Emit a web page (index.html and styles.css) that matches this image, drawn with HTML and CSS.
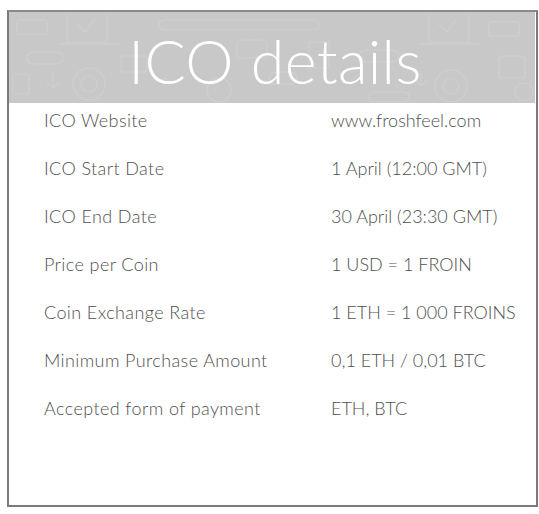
FILE: index.html
```html
<!DOCTYPE html>
<html>
<head>
<meta charset="utf-8">
<link rel="stylesheet" href="styles.css">
</head>
<body>
<div class="card">
  <header class="banner">
    <svg class="pattern" viewBox="0 0 526 91" preserveAspectRatio="none" aria-hidden="true">
      <g fill="none" stroke="#cfcfcf" stroke-width="1.2">
        <rect x="8" y="8" width="30" height="14" rx="2"/>
        <path d="M58 2v28h40v-28M68 12l8 8 10-14"/>
        <path d="M50 32h60"/>
        <rect x="18" y="40" width="36" height="12" rx="6"/>
        <circle cx="80" cy="72" r="16"/>
        <circle cx="80" cy="72" r="8"/>
        <path d="M44 60v16M38 70l6 6 6-6"/>
        <rect x="4" y="62" width="16" height="20" rx="3"/>
        <rect x="150" y="8" width="160" height="10" rx="5"/>
        <rect x="112" y="44" width="26" height="16" rx="3"/>
        <path d="M150 70l6 -4 6 4"/>
        <circle cx="210" cy="78" r="12"/>
        <rect x="228" y="28" width="30" height="18" rx="4"/>
        <rect x="300" y="30" width="20" height="26"/>
        <rect x="260" y="60" width="28" height="12" rx="6"/>
        <rect x="350" y="38" width="40" height="12" rx="6"/>
        <rect x="360" y="80" width="40" height="10" rx="5"/>
        <path d="M420 2v28h40v-28M430 12l8 8 10-14"/>
        <path d="M410 32h60"/>
        <circle cx="442" cy="74" r="16"/>
        <circle cx="442" cy="74" r="8"/>
        <path d="M412 58v16M406 68l6 6 6-6"/>
        <rect x="480" y="10" width="30" height="14" rx="2"/>
        <rect x="490" y="44" width="26" height="22" rx="3"/>
        <circle cx="515" cy="80" r="9"/>
      </g>
    </svg>
    <h1 class="title">ICO details</h1>
  </header>
  <dl class="details">
    <dt>ICO Website</dt><dd>www.froshfeel.com</dd>
    <dt>ICO Start Date</dt><dd>1 April (12:00 GMT)</dd>
    <dt>ICO End Date</dt><dd>30 April (23:30 GMT)</dd>
    <dt>Price per Coin</dt><dd>1 USD = 1 FROIN</dd>
    <dt>Coin Exchange Rate</dt><dd>1 ETH = 1 000 FROINS</dd>
    <dt>Minimum Purchase Amount</dt><dd>0,1 ETH / 0,01 BTC</dd>
    <dt>Accepted form of payment</dt><dd>ETH, BTC</dd>
  </dl>
</div>
</body>
</html>
```

FILE: styles.css
```css
html, body {
  margin: 0;
  padding: 0;
  background: #fff;
}
body {
  padding: 10px 1px 7px 7px;
}
.card {
  box-sizing: border-box;
  width: 531px;
  height: 497px;
  border: 2px solid #7a7a7a;
  border-top-color: #8a8a8a;
  background: #fff;
  font-family: "Lato", "Liberation Sans", sans-serif;
}
.banner {
  position: relative;
  height: 91px;
  margin-right: 1px;
  background: #c8c8c8;
  display: flex;
  align-items: center;
  justify-content: center;
  overflow: hidden;
}
.pattern {
  position: absolute;
  inset: 0;
  width: 100%;
  height: 100%;
}
.title {
  position: relative;
  margin: 0;
  padding: 6px 0 0 6px;
  font-family: "Lato", sans-serif;
  font-weight: 300;
  font-size: 61px;
  line-height: 1;
  color: #fff;
  letter-spacing: 0.3px;
}
.details {
  margin: 0;
  padding: 5px 0 0 35px;
  display: grid;
  grid-template-columns: 287px auto;
  row-gap: 24px;
  font-weight: 300;
  font-size: 18px;
  line-height: 24px;
  color: #505050;
}
.details dt, .details dd {
  margin: 0;
}
.details dt {
  letter-spacing: 0.4px;
}
```
